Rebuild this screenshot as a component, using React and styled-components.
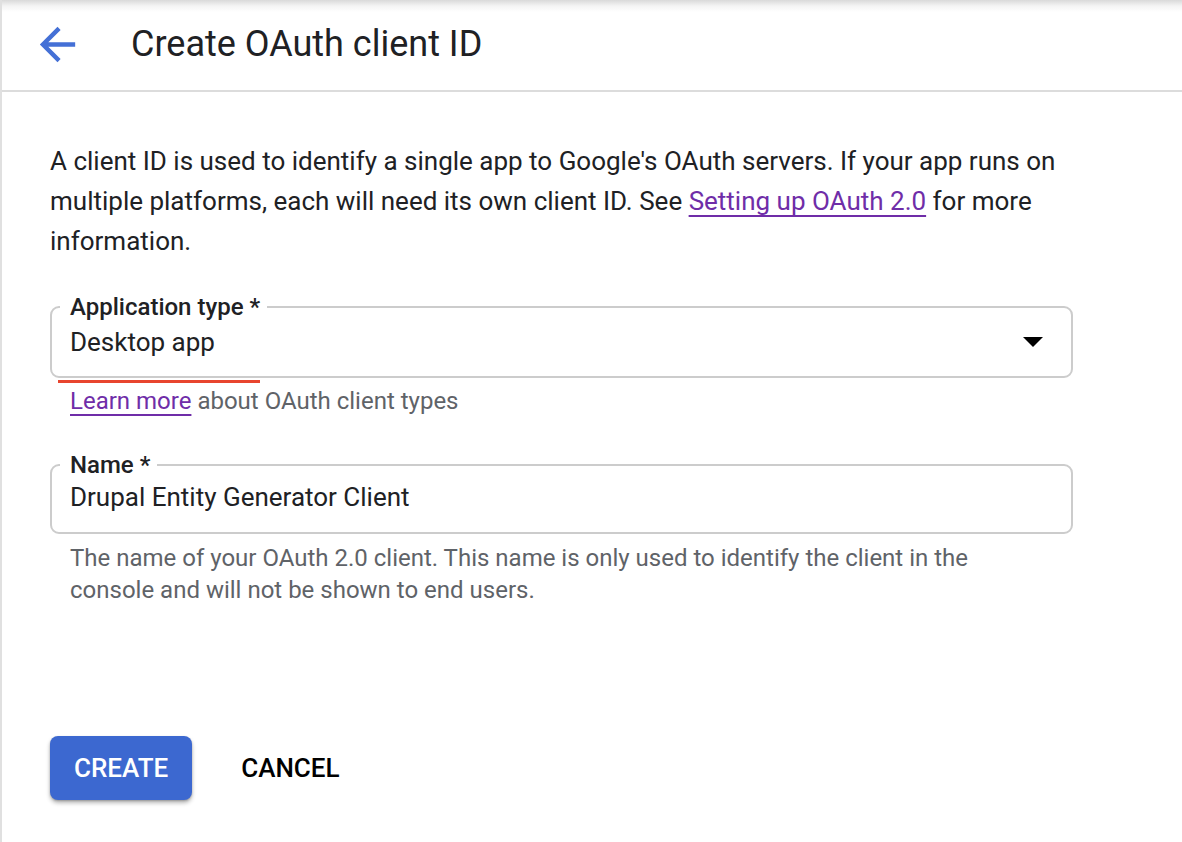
import React from "react";
import styled, { createGlobalStyle } from "styled-components";

const GlobalStyle = createGlobalStyle`
    html, body {
        margin: 0;
        padding: 0;
        background: #ffffff;
    }
    body {
        font-family: Roboto, "Noto Sans", "Liberation Sans", sans-serif;
        color: #202124;
    }
`;

const Page = styled.div`
    min-height: 842px;
    border-left: 2px solid #e0e0e0;
    box-sizing: border-box;
    background: linear-gradient(to bottom, #d9d9d9 0px, #f4f4f4 6px, #ffffff 12px);
`;

const Header = styled.header`
    height: 92px;
    display: flex;
    align-items: center;
    padding-bottom: 2px;
    box-sizing: border-box;
    border-bottom: 2px solid #dcdcdc;
`;

const BackButton = styled.button`
    border: none;
    background: none;
    padding: 0;
    margin-left: 29px;
    margin-right: 47px;
    width: 53px;
    height: 53px;
    display: flex;
    cursor: pointer;
    color: #4470d6;
`;

const Title = styled.h1`
    margin: 0;
    font-size: 36px;
    font-weight: 400;
    color: #202124;
    letter-spacing: 0;
`;

const Content = styled.main`
    padding: 49px 0 0 48px;
    width: 1023px;
`;

const Intro = styled.p`
    margin: 0 0 33px;
    font-size: 26px;
    line-height: 40px;
    color: #202124;
`;

const Link = styled.a`
    color: #6f2da8;
    text-decoration: underline;
    text-underline-offset: 5px;
    text-decoration-thickness: 2px;
    cursor: pointer;
`;

const Field = styled.fieldset`
    margin: 0;
    border: 2px solid #cccccc;
    border-radius: 9px;
    padding: ${(p) => (p.$tall ? "7px 18px 19px 8px" : "4px 18px 20px 8px")};
    display: flex;
    align-items: center;
    min-width: 0;
`;

const Legend = styled.legend`
    padding: 0 7px 0 10px;
    font-size: 24px;
    line-height: 26px;
    font-weight: 500;
    color: #202124;
`;

const Value = styled.div`
    flex: 1;
    padding-left: 10px;
    font-size: 26px;
    line-height: 30px;
    color: #202124;
`;

const Caret = styled.span`
    width: 0;
    height: 0;
    border-left: 10px solid transparent;
    border-right: 10px solid transparent;
    border-top: 10px solid #000000;
    margin-right: 10px;
`;

const ErrorBar = styled.div`
    margin: 2px 0 0 8px;
    width: 202px;
    height: 3px;
    background: #e8452f;
`;

const Hint = styled.p`
    margin: ${(p) => p.$top || "0"} 0 ${(p) => p.$bottom || "0"} 20px;
    font-size: 24px;
    line-height: 32px;
    color: #5f6368;
    max-width: 920px;
`;

const Actions = styled.div`
    display: flex;
    align-items: center;
    gap: 25px;
`;

const Button = styled.button`
    height: 64px;
    padding: 0 24px;
    border: none;
    border-radius: 8px;
    font-family: Roboto, "Liberation Sans", sans-serif;
    font-size: 26px;
    font-weight: 500;
    letter-spacing: 0;
    cursor: pointer;
    background: ${(p) => (p.$primary ? "#3c68d0" : "transparent")};
    color: ${(p) => (p.$primary ? "#ffffff" : "#000000")};
    box-shadow: ${(p) =>
        p.$primary ? "0 3px 4px rgba(0,0,0,0.28), 0 1px 2px rgba(0,0,0,0.2)" : "none"};
`;

const ArrowIcon = () => (
    <svg viewBox="0 0 24 24" width="53" height="53" fill="currentColor">
        <path d="M20 11H7.83l5.59-5.59L12 4l-8 8 8 8 1.41-1.41L7.83 13H20v-2z" />
    </svg>
);

export default function App() {
    return (
        <>
            <GlobalStyle />
            <Page>
                <Header>
                    <BackButton aria-label="Back">
                        <ArrowIcon />
                    </BackButton>
                    <Title>Create OAuth client ID</Title>
                </Header>
                <Content>
                    <Intro>
                        A client ID is used to identify a single app to Google's OAuth servers. If
                        your app runs on multiple platforms, each will need its own client ID. See{" "}
                        <Link>Setting up OAuth 2.0</Link> for more information.
                    </Intro>

                    <Field $tall>
                        <Legend>Application type *</Legend>
                        <Value>Desktop app</Value>
                        <Caret />
                    </Field>
                    <ErrorBar />
                    <Hint $top="2px" $bottom="35px">
                        <Link>Learn more</Link> about OAuth client types
                    </Hint>

                    <Field>
                        <Legend>Name *</Legend>
                        <Value>Drupal Entity Generator Client</Value>
                    </Field>
                    <Hint $top="8px" $bottom="130px">
                        The name of your OAuth 2.0 client. This name is only used to identify the
                        client in the console and will not be shown to end users.
                    </Hint>

                    <Actions>
                        <Button $primary>CREATE</Button>
                        <Button>CANCEL</Button>
                    </Actions>
                </Content>
            </Page>
        </>
    );
}
